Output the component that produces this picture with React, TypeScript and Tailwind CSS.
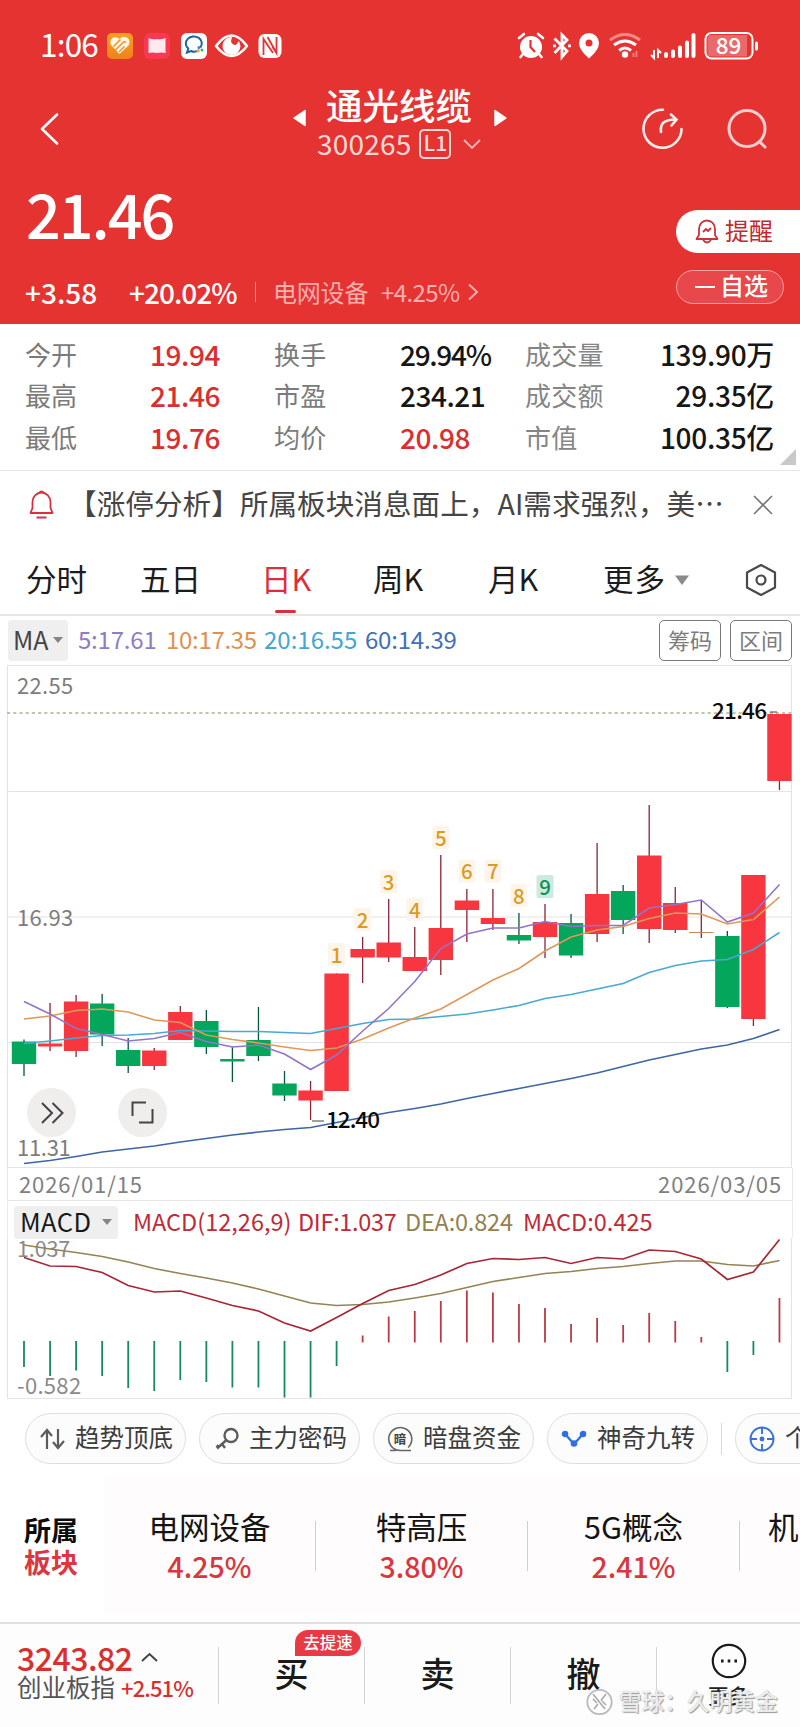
import type { ReactNode } from "react";

type Candle = { up: boolean; top: number; bottom: number; high: number; low: number };

const px = (i: number) => 24 + i * 26.05;

const raw: [number, number, number, number, number][] = [
  [0, 1041.5, 1064, 1039.5, 1076],
  [1, 1043.5, 1046.5, 1003, 1051],
  [1, 1001.5, 1051, 995, 1057],
  [0, 1003.5, 1034.5, 994, 1046],
  [0, 1050, 1066, 1038, 1073],
  [1, 1050.5, 1066, 1048, 1070],
  [1, 1012, 1040, 1006, 1040],
  [0, 1021, 1047, 1010, 1054],
  [0, 1059, 1061.5, 1047, 1082],
  [0, 1040, 1056, 1007, 1061],
  [0, 1083.5, 1095.5, 1071, 1101],
  [1, 1090.5, 1100.5, 1081, 1120],
  [1, 973.5, 1091, 973.5, 1091],
  [1, 949, 957.5, 937, 983],
  [1, 942.5, 957.5, 899, 962],
  [1, 957, 971, 927, 971],
  [1, 928, 960, 855, 975],
  [1, 900.5, 910, 889, 942],
  [1, 918, 924, 889, 930],
  [0, 935, 940.5, 913, 944],
  [1, 922, 937, 904, 958],
  [0, 923, 955.5, 914, 958],
  [1, 894, 934, 843, 942],
  [0, 891, 920, 885, 934],
  [1, 855.5, 929, 805, 943],
  [1, 903, 930, 887, 933],
  [1, 932, 933, 900, 938],
  [0, 936, 1007, 931, 1008],
  [1, 875, 1019, 875, 1026],
  [1, 714, 781, 714, 790],
];
const candles: Candle[] = raw.map(([u, top, bottom, high, low]) => ({ up: u === 1, top, bottom, high, low }));

const ma5 = [1001.5, 1014, 1028.5, 1034.5, 1041, 1038.5, 1032.5, 1041.5, 1047, 1045, 1054, 1069.5, 1055, 1031, 1008.5, 981.5, 948.5, 934, 928, 928, 921.5, 926.5, 925.5, 925.5, 908, 904.5, 900, 922, 913, 884.5];
const ma10 = [1019, 1016, 1010.5, 1009, 1012, 1020, 1022.5, 1035, 1039.5, 1043, 1047, 1050.5, 1048, 1039, 1028, 1018, 1009, 994.5, 980, 968.5, 951, 937, 930, 926.5, 918.5, 913, 914, 924, 919.5, 897];
const ma20 = [1043.5, 1041, 1038, 1035.5, 1035, 1033.5, 1030.5, 1031, 1031.5, 1031.5, 1032.5, 1033.5, 1028.5, 1023.5, 1019.5, 1019, 1016.5, 1014, 1010, 1005.5, 998.5, 994.5, 989, 983.5, 972.5, 965.5, 961, 959.5, 949.5, 932.5];
const ma60 = [1163.5, 1160.5, 1156.5, 1152, 1149, 1146, 1142, 1138.5, 1135, 1132, 1129.5, 1127.5, 1122.5, 1117.5, 1112.5, 1108.5, 1104, 1098.5, 1093.5, 1088.5, 1083.5, 1078.5, 1073, 1066.5, 1060, 1054.5, 1049, 1045, 1038.5, 1029.5];
const dif = [1257.5, 1266, 1266.5, 1272.5, 1285.5, 1292, 1291, 1298, 1305.5, 1311, 1323, 1331, 1317.5, 1303.5, 1290.5, 1284.5, 1275, 1263.5, 1258.5, 1259.5, 1257.5, 1263.5, 1257.5, 1259, 1250, 1251.5, 1259, 1279.5, 1272, 1239.5];
const dea = [1245, 1249, 1252.5, 1256.5, 1262, 1268.5, 1273.5, 1278, 1283, 1289, 1296, 1303, 1305.5, 1304.5, 1302, 1298, 1293.5, 1287.5, 1281.5, 1277.5, 1273.5, 1271.5, 1268.5, 1266.5, 1263.5, 1261, 1261, 1264.5, 1266, 1260.5];
const bars = [1367, 1376, 1370.5, 1376, 1388, 1391, 1380, 1382, 1387.5, 1387.5, 1397.5, 1397.5, 1366, 1335.5, 1316.5, 1311, 1301, 1290.5, 1292.5, 1304, 1308, 1324, 1318, 1325, 1313, 1321, 1337, 1372, 1355, 1298];
const turns = [955, 920, 882, 910, 838, 871.5, 871.5, 896, 887];

const line = (ys: number[]) => ys.map((y, i) => `${px(i).toFixed(1)},${y}`).join(" ");

function StatusBar() {
  return (
    <div className="flex h-[92px] items-center pl-[40px] pr-[40px]">
      <span className="w-[67px] pb-[4px] text-[31.500px] leading-none tracking-[-0.800px]">1:06</span>
      <svg className="h-[28px] w-[176px]" viewBox="107 32 176 28">
        <defs>
          <linearGradient id="og" x1="0" y1="0" x2="0" y2="1">
            <stop offset="0" stopColor="#f9a01d" />
            <stop offset="1" stopColor="#f0811c" />
          </linearGradient>
        </defs>
        <rect x="107" y="33" width="26" height="26" rx="5" fill="url(#og)" />
        <path d="M119.500 54l-8-8.500a5 5 0 0 1 8-6.500 5.500 5.500 0 0 1 9 6.500z" fill="#fff6e6" />
        <path d="M113.500 46.500l7-7M115.500 50l7.500-7.500q1.500-1.500 3 0M119 52l5.500-5.500" stroke="#f5921c" strokeWidth="1.500" fill="none" />
        <rect x="144" y="33" width="26" height="26" rx="6" fill="#fa3852" />
        <path d="M148.500 38q4 2 8.500 1 4 1 8.500-1v15q-4-1-8.500 0-4-1-8.500 0z" fill="#ffe9f0" />
        <rect x="181" y="33" width="26" height="26" rx="6" fill="#fff" />
        <path d="M199 50c-3 2-6 2-8 1l-4 1.500 1.300-4a8 7 0 1 1 12-1" stroke="#1d62a5" strokeWidth="2" fill="none" />
        <circle cx="199" cy="47.500" r="1.500" fill="#3a7fd0" />
        <circle cx="202" cy="50" r="1.500" fill="#38b46b" />
        <circle cx="198" cy="51" r="1.500" fill="#f3a72c" />
        <path d="M216 46q15.500-21 31 0-15.500 20-31 0z" fill="none" stroke="#fff" strokeWidth="2.600" strokeLinejoin="round" />
        <path d="M232 37a9 9 0 1 0 8.500 9 l-1.500-5-3 4a4.500 4.500 0 0 1-5-4z" fill="#fff" />
        <rect x="258.500" y="34" width="23" height="24" rx="6" fill="#fff" />
        <path d="M263.500 55V39l9.500 14M267.500 37l9 16V37M263.500 39l4.500 6.500M276.500 53l-4-6" stroke="#e53332" strokeWidth="1.800" fill="none" />
      </svg>
      <svg className="ml-auto h-[32px] w-[244px]" viewBox="515 30 244 32" fill="none" stroke="#fff">
        <circle cx="530" cy="47" r="11" fill="#fff" stroke="none" />
        <path d="M518 38l5-4M542 38l-5-4M522 54l-2.500 3M538 54l2.500 3" strokeWidth="2.600" strokeLinecap="round" />
        <path d="M529.500 40v7l4.500 5" stroke="#e53332" strokeWidth="2.200" />
        <path d="M553.500 38.500L566 51l-5 6V35l5 5-12.500 13" strokeWidth="2.800" />
        <path d="M552 45.800h3M567 45.800h3" strokeWidth="2.800" />
        <path d="M588 33a10 10 0 0 1 10 10q0 7-10 15.500Q578 50 578 43a10 10 0 0 1 10-10z" fill="#fff" stroke="none" />
        <circle cx="588" cy="43" r="3.500" fill="#e53332" stroke="none" />
        <path d="M609 40q15-11 30 0" strokeWidth="3" stroke="#f28a88" />
        <path d="M613 45q11-8 22 0M618 50.500q6-5 12 0" strokeWidth="3" />
        <circle cx="624" cy="54.500" r="3.200" fill="#fff" stroke="none" />
        <path d="M632.500 53v4M635.500 51v6" strokeWidth="1.800" stroke="#f28a88" />
        <path d="M653 50v8l-3-3M657 58v-8l3 3" strokeWidth="2" />
        <path d="M665 54v2M672 51.500v4.500M679 47.500V56M686 42.500V56M692.500 35v21" strokeWidth="4" strokeLinecap="round" />
        <rect x="704.500" y="33" width="47" height="25.500" rx="6" strokeWidth="2" />
        <path d="M706.500 38q0-3 3-3H746v21.500h-36.500q-3 0-3-3z" fill="#e9696c" stroke="none" />
        <path d="M755.500 43v6" strokeWidth="3" strokeLinecap="round" />
        <text x="727.500" y="54" textAnchor="middle" fontSize="22.500" fontWeight="500" fill="#fff" stroke="none">89</text>
      </svg>
    </div>
  );
}

function Header() {
  return (
    <header className="flex h-[324px] flex-col bg-[#e53332] text-white">
      <StatusBar />
      <div className="flex h-[76px] items-center pb-[3px]">
        <svg className="ml-[38px] h-[36px] w-[22px]" viewBox="0 0 22 36" fill="none" stroke="#fff" strokeWidth="2.600" strokeLinecap="round" strokeLinejoin="round">
          <path d="M19 3.500L4 18l15 14.500" />
        </svg>
        <svg className="mb-[22px] ml-[232px] h-[20px] w-[15px]" viewBox="0 0 15 20">
          <path d="M2 10L13 2.500v15z" fill="#fff" stroke="#fff" strokeWidth="1.500" strokeLinejoin="round" />
        </svg>
        <div className="mb-[10px] flex w-[186px] flex-col pl-[10px]">
          <div className="pl-[9px] text-[36.500px] font-medium leading-[38px]">通光线缆</div>
          <div className="mt-[2px] flex h-[36px] items-center text-[#fdd9d7]">
            <span className="pb-[2px] text-[28px] leading-[36px] tracking-[0.2px]">300265</span>
            <span className="ml-[8px] flex h-[30px] w-[32px] shrink-0 items-center justify-center rounded-[5px] border-2 border-[#fdd9d7] pb-[2px] text-[21px] font-medium leading-none text-[#fdd9d7]">L1</span>
            <svg className="ml-[12px] h-[12px] w-[18px] shrink-0" viewBox="0 0 18 12" fill="none" stroke="#f9b9b7" strokeWidth="1.800">
              <path d="M1 2l8 8 8-8" />
            </svg>
          </div>
        </div>
        <svg className="mb-[22px] h-[20px] w-[15px]" viewBox="0 0 15 20">
          <path d="M13 10L2 2.500v15z" fill="#fff" stroke="#fff" strokeWidth="1.500" strokeLinejoin="round" />
        </svg>
        <svg className="ml-[133px] h-[42px] w-[42px]" viewBox="0 0 42 42" fill="none" stroke="#ffeceb" strokeWidth="2.600" strokeLinecap="round">
          <path d="M22 1.800A19 19 0 1 0 40.500 21" />
          <path d="M20 24c-1-9 3-12 14.500-12.500M30 6.500l5.500 5-5 6" />
        </svg>
        <svg className="ml-[44px] h-[42px] w-[42px]" viewBox="0 0 42 42" fill="none" stroke="#fbd0cf" strokeWidth="3" strokeLinecap="round">
          <circle cx="20" cy="20.500" r="18" />
          <path d="M32.500 33.500L38 39" />
        </svg>
      </div>
      <div className="flex flex-1 justify-between">
        <div className="flex flex-col">
          <div className="h-[92px] pl-[26px] pt-[12px] text-[61px] font-medium leading-[66px] tracking-[-2px]">21.46</div>
          <div className="flex h-[64px] items-center">
            <span className="ml-[25px] w-[104px] text-[28px] font-medium leading-none">+3.58</span>
            <span className="w-[126px] text-[28px] font-medium leading-none tracking-[-1px]">+20.02%</span>
            <span className="h-[20px] w-px bg-[#f0918f]" />
            <span className="ml-[17px] w-[108px] text-[24px] leading-none tracking-[-0.2px] text-[#f7b0ae]">电网设备</span>
            <span className="w-[86px] text-[24px] leading-none tracking-[-0.6px] text-[#f7b0ae]">+4.25%</span>
            <svg className="h-[18px] w-[12px]" viewBox="0 0 12 18" fill="none" stroke="#f7b0ae" strokeWidth="2">
              <path d="M2 1.500L10 9l-8 7.500" />
            </svg>
          </div>
        </div>
        <div className="flex w-[124px] flex-col pt-[42px]">
          <div className="flex h-[43px] items-center rounded-l-full bg-white pl-[19px] text-[24px] leading-none text-[#c2282e]">
            <svg className="mr-[6px] h-[25px] w-[24px]" viewBox="0 0 24 25" fill="none" stroke="#c8343a" strokeWidth="1.800" strokeLinejoin="round">
              <path d="M4 16V10a8 8.500 0 0 1 16 0v6l2.500 4h-21z" />
              <path d="M8 13l3-3 2 2 3-3M8 21q4 5 8 0" />
            </svg>
            <span className="pb-[4px]">提醒</span>
          </div>
          <div className="mt-[17px] flex h-[34px] w-[108px] items-center rounded-full border border-[#f2a2a1] bg-[#e8484b] pl-[18px] text-[24px] font-medium leading-none">
            <span className="mr-[5px] h-[2px] w-[20px] bg-white" />
            <span className="pb-[4px]">自选</span>
          </div>
        </div>
      </div>
    </header>
  );
}

const stats: [string, string, string, string, string, string][] = [
  ["今开", "19.94", "换手", "29.94%", "成交量", "139.90万"],
  ["最高", "21.46", "市盈", "234.21", "成交额", "29.35亿"],
  ["最低", "19.76", "均价", "20.98", "市值", "100.35亿"],
];

const middleStyles = [
  "w-[125px] text-[28px] font-medium tracking-[-1.300px] text-[#161616]",
  "w-[125px] text-[28px] font-medium tracking-[-0.500px] text-[#161616]",
  "w-[125px] text-[28px] font-medium tracking-[-0.400px] text-[#d9302f]",
];

function Stats() {
  return (
    <section className="relative flex h-[147px] flex-col border-b border-[#e6e6e6] pt-[9px] text-[26px] leading-none text-[#7b7b7b]">
      {stats.map((r, i) => (
        <div key={r[0]} className="flex h-[41.500px] items-center">
          <span className="ml-[25px] w-[125px]">{r[0]}</span>
          <span className="w-[124px] text-[28px] font-medium tracking-[-0.4px] text-[#d9302f]">{r[1]}</span>
          <span className="w-[126px] tracking-[0.300px]">{r[2]}</span>
          <span className={middleStyles[i]}>{r[3]}</span>
          <span className="w-[100px] whitespace-nowrap tracking-[0.300px] text-[#858585]">{r[4]}</span>
          <span className="w-[149px] text-right text-[28px] font-medium tracking-[-0.3px] text-[#161616]">{r[5]}</span>
        </div>
      ))}
      <svg className="absolute bottom-[5px] right-[4px] h-[16px] w-[16px]" viewBox="0 0 16 16">
        <path d="M16 0v16H0z" fill="#c9c9c9" />
      </svg>
    </section>
  );
}

function News() {
  return (
    <section className="flex h-[69px] items-center">
      <svg className="ml-[29px] mt-[-1px] h-[30px] w-[25px]" viewBox="0 0 25 30" fill="none" stroke="#d8303c" strokeWidth="1.800" strokeLinejoin="round">
        <path d="M3.500 18v-6a9 9.500 0 0 1 18 0v6l2 5h-22zM10 3q2.500-3 5 0M7.500 27.500h10" />
      </svg>
      <span className="ml-[14px] w-[676px] whitespace-nowrap pb-[5px] text-[28.600px] leading-none tracking-[0.040px] text-[#454545]">【涨停分析】所属板块消息面上，AI需求强烈，美⋯</span>
      <svg className="ml-[9px] mb-[2px] h-[20px] w-[20px]" viewBox="0 0 20 20" fill="none" stroke="#777" strokeWidth="1.600">
        <path d="M1 1l18 18M19 1L1 19" />
      </svg>
    </section>
  );
}

function Tabs() {
  return (
    <nav className="flex h-[76px] items-center border-b-2 border-[#e6e6e8] pt-[6px] text-[30.500px] leading-none text-[#1c1c1c]">
      <span className="ml-[26px] w-[114px] pb-[3px]">分时</span>
      <span className="w-[121px] pb-[3px]">五日</span>
      <span className="relative w-[112px] pb-[3px] text-[#d8303c]">
        日K
        <span className="absolute left-[14px] top-[47px] h-[3px] w-[21px] rounded bg-[#d8303c]" />
      </span>
      <span className="w-[115px] pb-[3px]">周K</span>
      <span className="w-[115px] pb-[3px]">月K</span>
      <span className="w-[72px] pb-[3px] tracking-[1px]">更多</span>
      <svg className="h-[10px] w-[14px]" viewBox="0 0 14 10">
        <path d="M0 .5h14L7 10z" fill="#8a8a8a" />
      </svg>
      <svg className="ml-[56px] h-[34px] w-[32px]" viewBox="0 0 32 34" fill="none" stroke="#4a4a4a" strokeWidth="2.200" strokeLinejoin="round">
        <path d="M16 2l14 7.500v15L16 32 2 24.500v-15z" />
        <circle cx="16" cy="17" r="4.500" />
      </svg>
    </nav>
  );
}

function MaRow() {
  return (
    <div className="flex h-[49px] items-center pb-[1px] text-[24px] leading-none">
      <div className="ml-[8px] flex h-[41px] w-[60px] items-center rounded-[4px] bg-[#efefef] pl-[5px] text-[25px] text-[#444]">
        <span className="w-[40px] pb-[2px]">MA</span>
        <svg className="h-[6px] w-[10px]" viewBox="0 0 10 6">
          <path d="M0 0h10L5 6z" fill="#858585" />
        </svg>
      </div>
      <span className="ml-[10px] w-[88px] pb-[2px] tracking-[-0.2px] text-[#8f7cc8]">5:17.61</span>
      <span className="w-[98px] pb-[2px] tracking-[-0.300px] text-[#df914f]">10:17.35</span>
      <span className="w-[101px] pb-[2px] text-[#43a6d4]">20:16.55</span>
      <span className="w-[100px] pb-[2px] tracking-[-0.200px] text-[#4070b8]">60:14.39</span>
      <span className="ml-auto flex h-[41px] w-[62px] items-center justify-center rounded-[5px] border border-[#777] pb-[3px] text-[22px] text-[#7c7c7c]">筹码</span>
      <span className="ml-[9px] mr-[8px] flex h-[41px] w-[62px] items-center justify-center rounded-[5px] border border-[#777] pb-[3px] text-[22px] text-[#7c7c7c]">区间</span>
    </div>
  );
}

function KChart() {
  return (
    <div className="relative">
      <svg className="block h-[503px] w-[800px]" viewBox="0 665 800 503" fill="none">
        <g stroke="#e4e4e4" strokeWidth="1.200">
          <path d="M7 665.500H792M7 791.500H792M7 917H792M7 1042.500H792M7 1167.500H792M7.500 665V1168M791.500 665V1168" />
        </g>
        <text x="17" y="694" fontSize="22" fill="#7d7d7d" letterSpacing="0.300">22.55</text>
        <text x="17" y="926" fontSize="22" fill="#7d7d7d" letterSpacing="0.300">16.93</text>
        <path d="M7 713H792" stroke="#b5b08c" strokeWidth="1.600" strokeDasharray="3.200 3" />
        {candles.map((c, i) => (
          <g key={i}>
            <path d={`M${px(i)} ${c.high}V${c.low}`} stroke={c.up ? "#8a2536" : "#07563a"} strokeWidth="1.300" />
            <rect x={px(i) - 12.2} y={c.top} width="24.400" height={c.bottom - c.top} fill={i === 26 ? "#c8875f" : c.up ? "#f7363f" : "#03a65a"} />
          </g>
        ))}
        <polyline points={line(ma20)} stroke="#48a9d2" strokeWidth="1.600" />
        <polyline points={line(ma10)} stroke="#df9857" strokeWidth="1.600" />
        <polyline points={line(ma5)} stroke="#9474c6" strokeWidth="1.600" />
        <polyline points={line(ma60)} stroke="#3d66a8" strokeWidth="1.700" />
        {turns.map((y, i) => (
          <g key={i}>
            <rect x={px(12 + i) - 8.5} y={y - 12} width="17" height="23" rx="2" fill={i === 8 ? "#cdeadf" : "#fdf4ea"} />
            <text x={px(12 + i)} y={y + 7.5} textAnchor="middle" fontSize="20.500" fontWeight="500" fill={i === 8 ? "#108f56" : "#dd9c1e"}>{i + 1}</text>
          </g>
        ))}
        <path d="M312 1121h12M770 712h7" stroke="#444" strokeWidth="1.200" />
        <text x="326" y="1128" fontSize="22.500" fontWeight="500" fill="#0c0c0c" textLength="54">12.40</text>
        <text x="712" y="719" fontSize="22.500" fontWeight="500" fill="#0c0c0c" textLength="55">21.46</text>
        <text x="17" y="1155.500" fontSize="22" fill="#7d7d7d" letterSpacing="-0.300">11.31</text>
      </svg>
      <div className="absolute left-[27px] top-[423px] flex h-[49px] w-[49px] items-center justify-center rounded-full bg-[#f0eded]">
        <svg className="h-[22px] w-[24px]" viewBox="0 0 24 22" fill="none" stroke="#444" strokeWidth="2">
          <path d="M2 1l10 10L2 21M12.500 1l10 10-10 10" />
        </svg>
      </div>
      <div className="absolute left-[118px] top-[423px] flex h-[49px] w-[49px] items-center justify-center rounded-full bg-[#f0eded]">
        <svg className="h-[23px] w-[23px]" viewBox="0 0 23 23" fill="none" stroke="#444" strokeWidth="2">
          <path d="M1.500 15V1.500H15M21.500 8v13.500H8" />
        </svg>
      </div>
    </div>
  );
}

function Macd() {
  return (
    <section>
      <div className="mx-[7px] flex h-[33px] items-center justify-between border-x border-b border-[#e6e6e6] pb-[2px] pl-[11px] pr-[10px] text-[22px] leading-none tracking-[0.900px] text-[#808080]">
        <span>2026/01/15</span>
        <span>2026/03/05</span>
      </div>
      <div className="mx-[7px] flex h-[37px] items-center border-x border-[#ececec] pt-[5px] text-[23.500px] leading-none">
        <div className="ml-[6px] flex h-[33px] w-[104px] items-center rounded-[4px] bg-[#efefef] pl-[6px] text-[25.500px] text-[#181818]">
          <span className="w-[82px] pb-[3px] tracking-[0.400px]">MACD</span>
          <svg className="h-[6px] w-[10px]" viewBox="0 0 10 6">
            <path d="M0 0h10L5 6z" fill="#858585" />
          </svg>
        </div>
        <span className="ml-[15px] w-[165px] pb-[1px] text-[#c02a36]">MACD(12,26,9)</span>
        <span className="w-[107px] pb-[1px] tracking-[-0.300px] text-[#c02a36]">DIF:1.037</span>
        <span className="w-[118px] pb-[1px] tracking-[-0.200px] text-[#93814e]">DEA:0.824</span>
        <span className="pb-[1px] text-[#c02a36]">MACD:0.425</span>
      </div>
      <svg className="block h-[162px] w-[800px]" viewBox="0 1238 800 162" fill="none">
        <path d="M7.500 1238V1398.500H791.500V1238" stroke="#e4e4e4" strokeWidth="1.200" />
        <text x="17" y="1257" fontSize="21.500" fill="#8a8a8a" letterSpacing="-0.100">1.037</text>
        <text x="17" y="1394" fontSize="22" fill="#8a8a8a" letterSpacing="0.300">-0.582</text>
        {bars.map((y, i) => {
          const down = y > 1342;
          return <path key={i} d={`M${px(i)} ${down ? 1341 : 1342.5}V${y}`} stroke={down ? "#178a5c" : "#b93a46"} strokeWidth="1.800" />;
        })}
        <polyline points={line(dea)} stroke="#958353" strokeWidth="1.600" />
        <polyline points={line(dif)} stroke="#a82533" strokeWidth="1.700" />
      </svg>
    </section>
  );
}

function Pill({ icon, label }: { icon: ReactNode; label: string }) {
  return (
    <div className="flex h-[51px] w-[161px] shrink-0 items-center rounded-full border border-[#dedede] bg-[#fdfcfc] pl-[13px] text-[24.500px] leading-none text-[#3c3c3c]">
      {icon}
      <span className="ml-[10px] whitespace-nowrap pb-[2px]">{label}</span>
    </div>
  );
}

function Pills() {
  return (
    <section className="flex h-[64px] shrink-0 items-center gap-[13px] overflow-hidden pl-[25px] pt-[13px]">
      <Pill
        label="趋势顶底"
        icon={
          <svg className="h-[24px] w-[26px]" viewBox="0 0 26 24" fill="none" stroke="#5c5c5c" strokeWidth="2.200">
            <path d="M8 22V3M2 10l6-7 5 6M19 2v19M25 14l-6 7-5-6" />
          </svg>
        }
      />
      <Pill
        label="主力密码"
        icon={
          <svg className="h-[24px] w-[26px]" viewBox="0 0 26 24" fill="none" stroke="#5c5c5c" strokeWidth="2.400">
            <circle cx="18" cy="8.500" r="6.500" />
            <path d="M13.500 13L4 21.500M9 17l3 4M5.500 18l-2 2.500" />
          </svg>
        }
      />
      <Pill
        label="暗盘资金"
        icon={
          <svg className="h-[26px] w-[26px]" viewBox="0 0 26 26" fill="none" stroke="#666" strokeWidth="1.600">
            <path d="M24 24.500H13A11.500 11.500 0 1 1 21 21.500M3 24.500h6" />
            <text x="13" y="17.500" fontSize="12.500" fontWeight="700" textAnchor="middle" fill="#444" stroke="none">暗</text>
          </svg>
        }
      />
      <Pill
        label="神奇九转"
        icon={
          <svg className="h-[18px] w-[26px]" viewBox="0 0 26 18" fill="#2f6fe4" stroke="#2f6fe4" strokeWidth="2.200">
            <path d="M4 4l9 10 9-10" fill="none" />
            <circle cx="4" cy="4" r="2.200" />
            <circle cx="13" cy="13.500" r="2.200" />
            <circle cx="22" cy="4" r="2.200" />
          </svg>
        }
      />
      <div className="h-[32px] w-px shrink-0 bg-[#dadada]" />
      <Pill
        label="个股诊断"
        icon={
          <svg className="h-[26px] w-[26px] shrink-0" viewBox="0 0 26 26" fill="none" stroke="#3a73d8" strokeWidth="1.900">
            <circle cx="13" cy="13" r="11.500" />
            <path d="M13 1v7M13 18v7M1 13h7M18 13h7" />
            <circle cx="13" cy="13" r="1.500" fill="#3a73d8" />
          </svg>
        }
      />
    </section>
  );
}

const sectors = [
  ["电网设备", "4.25%"],
  ["特高压", "3.80%"],
  ["5G概念", "2.41%"],
];

function Sectors() {
  return (
    <section className="flex h-[160px] shrink-0 items-center overflow-hidden border-b-2 border-[#e0e0e0] pt-[6px]">
      <div className="ml-[24px] w-[80px] shrink-0 text-[27px] font-bold leading-[32px]">
        <div className="text-[#0c0c0c]">所属</div>
        <div className="text-[#dc3640]">板块</div>
      </div>
      <div className="flex h-[136px] w-[900px] shrink-0 items-center rounded-l-[6px] bg-[#fefcfd]">
        {sectors.map(([name, pct]) => (
          <div key={name} className="flex w-[212px] shrink-0 items-center">
            <div className="flex-1 text-center">
              <div className="text-[30.500px] leading-[40px] text-[#141414]">{name}</div>
              <div className="text-[28.500px] font-medium leading-[40px] text-[#d8373c]">{pct}</div>
            </div>
            <div className="h-[50px] w-px bg-[#cfcfcf]" />
          </div>
        ))}
        <div className="ml-[28px] pb-[40px] text-[30.500px] leading-[40px] tracking-[2px] text-[#141414]">机器人</div>
      </div>
    </section>
  );
}

function BottomBar() {
  return (
    <footer className="relative flex h-[103px] items-start bg-[#fefdfd] pt-[23px]">
      <div className="w-[218px] pl-[17px]">
        <div className="flex items-center">
          <span className="text-[32px] font-medium leading-[20px] tracking-[-0.500px] text-[#d8302f]">3243.82</span>
          <svg className="ml-[9px] h-[10px] w-[17px]" viewBox="0 0 17 10" fill="none" stroke="#444" strokeWidth="2">
            <path d="M1 9l7.500-7L16 9" />
          </svg>
        </div>
        <div className="mt-[7px] flex h-[26px] items-center whitespace-nowrap leading-none">
          <span className="text-[24.500px] text-[#555]">创业板指</span>
          <span className="ml-[6px] text-[22px] font-medium tracking-[-0.900px] text-[#d8302f]">+2.51%</span>
        </div>
      </div>
      {["买", "卖", "撤"].map((t) => (
        <div key={t} className="relative flex h-[57px] w-[146px] items-center justify-center border-l border-[#d5d5d5] pb-[7px] text-[34px] font-medium text-[#1a1a1a]">
          {t}
          {t === "买" && (
            <span className="absolute left-[76px] top-[-17px] flex h-[26px] w-[66px] items-center justify-center rounded-full rounded-bl-none bg-[#e83a44] pb-[2px] text-[16.500px] font-medium leading-none text-white">去提速</span>
          )}
        </div>
      ))}
      <div className="flex h-[57px] flex-1 flex-col items-center border-l border-[#d5d5d5]">
        <svg className="-mt-[4px] h-[36px] w-[36px] shrink-0" viewBox="0 0 36 36" fill="none" stroke="#1a1a1a" strokeWidth="2.200">
          <circle cx="18" cy="18" r="16.200" />
          <path d="M10 18h2.600M16.700 18h2.600M23.400 18H26" strokeWidth="3" />
        </svg>
        <span className="mt-[5px] text-[20.500px] font-medium leading-[22px] text-[#222]">更多</span>
      </div>
      <div className="absolute left-[586px] top-[63px] flex h-[30px] items-center text-[22.500px] font-medium leading-none text-white/80 [text-shadow:1px_1px_1px_#999,0_0_1px_#aaa]">
        <svg className="h-[28px] w-[28px]" viewBox="0 0 28 28" fill="none">
          <circle cx="13.500" cy="14" r="12.200" fill="#ffffffaa" stroke="#b9b9b9" strokeWidth="1.800" />
          <path d="M7 6l12 15M20 6l-5 6.500M12 16l-4 5M7 11l4 4M16 13l4 4" stroke="#aaa" strokeWidth="1.600" />
        </svg>
        <span className="ml-[5px] whitespace-nowrap pb-[3px] tracking-[0.200px]">雪球：久明黄金</span>
      </div>
    </footer>
  );
}

export default function App() {
  return (
    <div className="flex h-[1727px] w-[800px] flex-col overflow-hidden bg-white font-['Noto_Sans_CJK_SC',sans-serif]">
      <Header />
      <Stats />
      <News />
      <Tabs />
      <MaRow />
      <KChart />
      <Macd />
      <Pills />
      <Sectors />
      <BottomBar />
    </div>
  );
}
